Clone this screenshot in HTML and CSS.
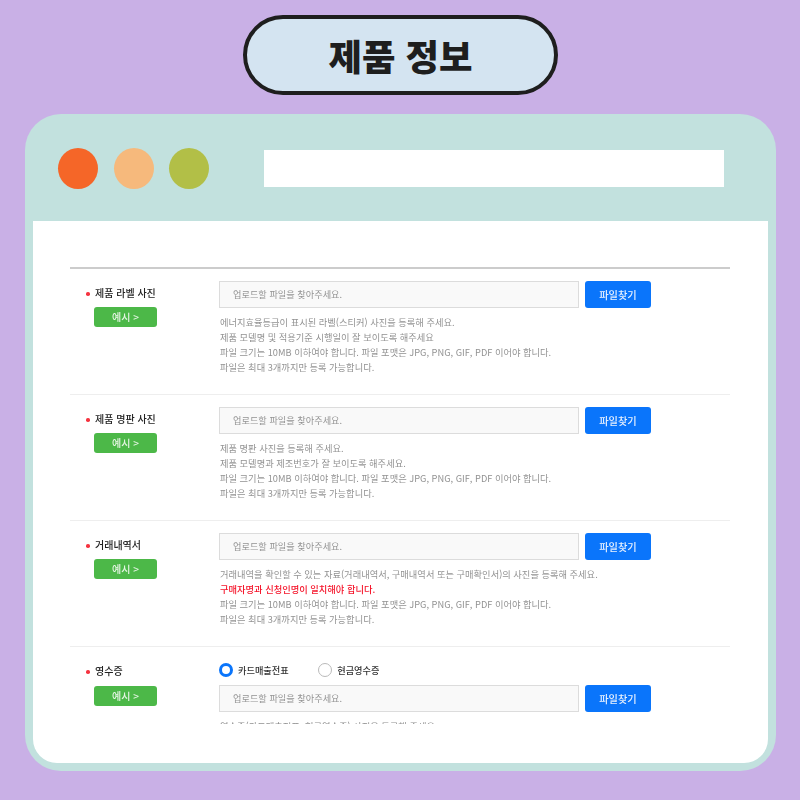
FILE: index.html
```html
<!DOCTYPE html>
<html lang="ko">
<head>
  <meta charset="UTF-8" />
  <title>제품 정보</title>
  <link rel="stylesheet" href="styles.css">
</head>
<body>
  <header class="title-row">
    <h1 class="title-pill">제품 정보</h1>
  </header>

  <div class="window">
    <div class="window-bar">
      <div class="dots">
        <span class="dot dot-red"></span>
        <span class="dot dot-peach"></span>
        <span class="dot dot-olive"></span>
      </div>
      <div class="address"></div>
    </div>

    <div class="window-body">
      <div class="form">
        <section class="row">
          <div class="label-col">
            <div class="label">제품 라벨 사진</div>
            <button class="example-btn">예시 &gt;</button>
          </div>
          <div class="field-col">
            <div class="upload">
              <div class="file-input">업로드할 파일을 찾아주세요.</div>
              <button class="file-btn">파일찾기</button>
            </div>
            <ul class="notes">
              <li>에너지효율등급이 표시된 라벨(스티커) 사진을 등록해 주세요.</li>
              <li>제품 모델명 및 적용기준 시행일이 잘 보이도록 해주세요</li>
              <li>파일 크기는 10MB 이하여야 합니다. 파일 포맷은 JPG, PNG, GIF, PDF 이어야 합니다.</li>
              <li>파일은 최대 3개까지만 등록 가능합니다.</li>
            </ul>
          </div>
        </section>

        <section class="row">
          <div class="label-col">
            <div class="label">제품 명판 사진</div>
            <button class="example-btn">예시 &gt;</button>
          </div>
          <div class="field-col">
            <div class="upload">
              <div class="file-input">업로드할 파일을 찾아주세요.</div>
              <button class="file-btn">파일찾기</button>
            </div>
            <ul class="notes">
              <li>제품 명판 사진을 등록해 주세요.</li>
              <li>제품 모델명과 제조번호가 잘 보이도록 해주세요.</li>
              <li>파일 크기는 10MB 이하여야 합니다. 파일 포맷은 JPG, PNG, GIF, PDF 이어야 합니다.</li>
              <li>파일은 최대 3개까지만 등록 가능합니다.</li>
            </ul>
          </div>
        </section>

        <section class="row">
          <div class="label-col">
            <div class="label">거래내역서</div>
            <button class="example-btn">예시 &gt;</button>
          </div>
          <div class="field-col">
            <div class="upload">
              <div class="file-input">업로드할 파일을 찾아주세요.</div>
              <button class="file-btn">파일찾기</button>
            </div>
            <ul class="notes">
              <li>거래내역을 확인할 수 있는 자료(거래내역서, 구매내역서 또는 구매확인서)의 사진을 등록해 주세요.</li>
              <li class="warn">구매자명과 신청인명이 일치해야 합니다.</li>
              <li>파일 크기는 10MB 이하여야 합니다. 파일 포맷은 JPG, PNG, GIF, PDF 이어야 합니다.</li>
              <li>파일은 최대 3개까지만 등록 가능합니다.</li>
            </ul>
          </div>
        </section>

        <section class="row row-receipt">
          <div class="label-col">
            <div class="label">영수증</div>
            <button class="example-btn">예시 &gt;</button>
          </div>
          <div class="field-col">
            <div class="radios">
              <span class="radio-item"><span class="radio radio-on"></span>카드매출전표</span>
              <span class="radio-item"><span class="radio"></span>현금영수증</span>
            </div>
            <div class="upload">
              <div class="file-input">업로드할 파일을 찾아주세요.</div>
              <button class="file-btn">파일찾기</button>
            </div>
            <ul class="notes">
              <li>영수증(카드매출전표, 현금영수증) 사진을 등록해 주세요.</li>
            </ul>
          </div>
        </section>
      </div>
    </div>
  </div>
</body>
</html>
```

FILE: styles.css
```css
* {
  box-sizing: border-box;
}
html, body {
  height: 100%;
}
body {
  margin: 0;
  background: #c9b0e6;
  font-family: "Noto Sans CJK KR", "Noto Sans", sans-serif;
  overflow: hidden;
}
.title-row {
  display: flex;
  justify-content: center;
  padding-top: 15px;
  padding-left: 1px;
}
.title-pill {
  margin: 0;
  width: 315px;
  height: 80px;
  display: flex;
  align-items: center;
  justify-content: center;
  background: #d4e4f1;
  border: 4px solid #1e1e1e;
  border-radius: 40px;
  color: #1e1e1e;
  font-size: 36.4px;
  font-weight: 900;
}
.window {
  margin: 19px 24px 0 25px;
  height: 657px;
  background: #c2e1de;
  border-radius: 36px;
  padding: 0 8px 8px;
  display: flex;
  flex-direction: column;
}
.window-bar {
  height: 107px;
  flex: none;
  display: flex;
  align-items: center;
  padding: 2px 0 0 25px;
}
.dots {
  display: flex;
  gap: 15.5px;
  width: 206px;
}
.dot {
  width: 40px;
  height: 41px;
  border-radius: 50%;
}
.dot-red { background: #f56628; }
.dot-peach { background: #f6b97c; }
.dot-olive { background: #b2bf47; }
.address {
  width: 460px;
  height: 37px;
  background: #fff;
}
.window-body {
  flex: 1;
  background: #fff;
  border-radius: 0 0 24px 24px;
  padding: 46px 38px 0 37px;
}
.form {
  height: 457px;
  overflow: hidden;
  border-top: 2px solid #cccccc;
  filter: blur(0.5px);
}
.row {
  height: 126px;
  display: flex;
  padding-top: 12px;
  border-bottom: 1px solid #eeeeee;
}
.row-receipt {
  border-bottom: none;
  padding-top: 15px;
}
.label-col {
  width: 149px;
  flex: none;
  padding: 4px 0 0 25px;
}
.row-receipt .label-col {
  padding-top: 1px;
}
.label {
  position: relative;
  font-size: 10px;
  line-height: 16px;
  font-weight: 500;
  color: #222;
}
.label::before {
  content: "";
  position: absolute;
  left: -9px;
  top: 7px;
  width: 3.5px;
  height: 3.5px;
  border-radius: 50%;
  background: #f5333f;
}
.example-btn {
  display: block;
  width: 63px;
  height: 20px;
  margin: 6px 0 0 -1px;
  padding: 0;
  border: none;
  border-radius: 3px;
  background: #4cb848;
  color: #e6f5e4;
  font-family: inherit;
  font-size: 10px;
  font-weight: 500;
  line-height: 20px;
}
.row-receipt .example-btn {
  margin-top: 7px;
}
.upload {
  display: flex;
  gap: 6px;
}
.file-input {
  width: 360px;
  height: 27px;
  border: 1.5px solid #dcdcdc;
  background: #f9f9f9;
  padding-left: 13px;
  color: #939393;
  font-size: 9.2px;
  line-height: 25px;
}
.file-btn {
  width: 66px;
  height: 27px;
  padding: 0;
  border: none;
  border-radius: 3px;
  background: #0a75fb;
  color: #e8f1fe;
  font-family: inherit;
  font-size: 10.2px;
  font-weight: 500;
}
.notes {
  list-style: none;
  margin: 6.5px 0 0;
  padding: 0 0 0 1px;
  color: #929292;
  font-size: 9.25px;
  line-height: 15px;
}
.notes .warn {
  color: #f5142a;
  font-weight: 500;
}
.radios {
  display: flex;
  gap: 29.5px;
  height: 23px;
}
.radio-item {
  display: flex;
  gap: 5px;
  height: 15px;
  align-items: center;
  color: #333;
  font-size: 9.2px;
  font-weight: 500;
}
.radio {
  width: 14px;
  height: 14px;
  border: 1px solid #b9b9b9;
  border-radius: 50%;
  background: #fff;
}
.radio-on {
  border: 3px solid #0a75fb;
}
```
